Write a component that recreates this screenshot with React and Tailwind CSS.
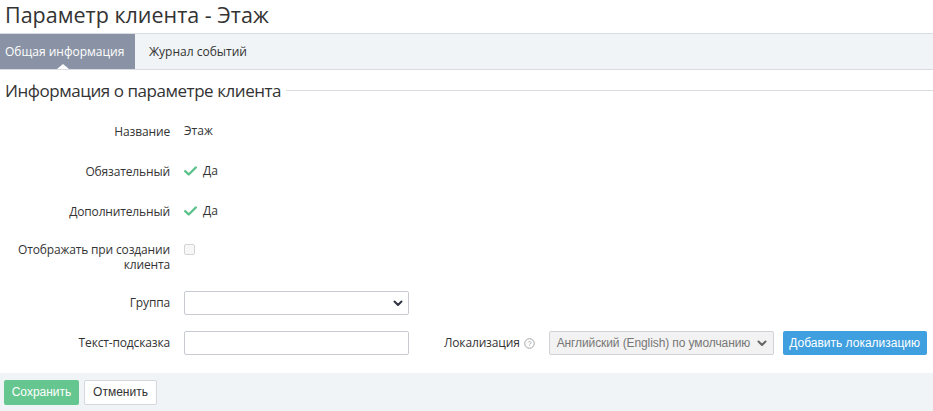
import React from "react";

function Check() {
  return (
    <svg width="13" height="10" viewBox="0 0 13 10" className="mr-[6px]">
      <path d="M1.2 5.2 L4.7 8.5 L11.8 1.5" fill="none" stroke="#5cc28a" strokeWidth="2.4" strokeLinecap="round" strokeLinejoin="round" />
    </svg>
  );
}

function Chevron({ color = "#2f3540" }) {
  return (
    <svg width="10" height="7" viewBox="0 0 10 7">
      <path d="M1.5 1.5 L5 5 L8.5 1.5" fill="none" stroke={color} strokeWidth="2" strokeLinecap="round" strokeLinejoin="round" />
    </svg>
  );
}

function Row({ label, children, className = "" }) {
  return (
    <div className={`flex ${className}`}>
      <div className="w-[170px] shrink-0 text-right text-[12px] leading-[15px] tracking-[-0.15px] text-[#333]">{label}</div>
      <div className="ml-[14px] flex items-center text-[12px] text-[#333]">{children}</div>
    </div>
  );
}

export default function App() {
  return (
    <div className="w-[933px] h-[411px] bg-white overflow-hidden" style={{ fontFamily: '"Open Sans", sans-serif' }}>
      <h1 className="h-[33px] pl-[5px] pt-[1px] text-[21.5px] leading-[28px] text-[#333] font-normal">Параметр клиента - Этаж</h1>

      <div className="flex h-[37px] border-y border-[#d9dce1] bg-[#f0f4f7] text-[12px]">
        <div className="relative flex items-center bg-[#8a93a5] px-[5px] w-[135px] text-white">
          Общая информация
          <div className="absolute bottom-0 left-[57px] h-0 w-0 border-x-[6px] border-b-[5px] border-x-transparent border-b-white" />
        </div>
        <div className="flex items-center pl-[14px] text-[#333]">Журнал событий</div>
      </div>

      <div className="flex items-center h-[41px] pl-[5px]">
        <span className="text-[17px] text-[#333] leading-[22px] tracking-[-0.45px]">Информация о параметре клиента</span>
        <div className="ml-[5px] flex-1 h-px bg-[#d9dce1]" />
      </div>

      <Row label="Название" className="h-[40px] items-center">Этаж</Row>
      <Row label="Обязательный" className="h-[40px] items-center"><Check />Да</Row>
      <Row label="Дополнительный" className="h-[40px] items-center"><Check />Да</Row>
      <div className="flex pt-[11px] h-[48px]">
        <div className="w-[170px] shrink-0 text-right text-[12px] leading-[15px] tracking-[-0.15px] text-[#333]">Отображать при создании клиента</div>
        <div className="ml-[14px] mt-[2px] h-[11px] w-[11px] rounded-[2px] border border-[#d4d4d4] bg-[#f7f7f7]" />
      </div>

      <div className="mt-[12px] flex items-center h-[24px]">
        <div className="w-[170px] shrink-0 text-right text-[12px] tracking-[-0.15px] text-[#333]">Группа</div>
        <div className="ml-[14px] flex h-[24px] w-[225px] items-center justify-end rounded-[2px] border border-[#c8ccd2] bg-white pr-[5px]">
          <Chevron />
        </div>
      </div>

      <div className="mt-[16px] flex items-center h-[24px]">
        <div className="w-[170px] shrink-0 text-right text-[12px] tracking-[-0.15px] text-[#333]">Текст-подсказка</div>
        <div className="ml-[14px] h-[24px] w-[225px] rounded-[2px] border border-[#c8ccd2] bg-white" />
        <div className="ml-[35px] flex items-center text-[12px] tracking-[-0.15px] text-[#333]">
          Локализация
          <svg width="11" height="11" viewBox="0 0 12 12" className="ml-[4px]">
            <circle cx="6" cy="6" r="5.2" fill="none" stroke="#9a9a9a" strokeWidth="1" />
            <text x="6" y="9" textAnchor="middle" fontSize="8" fill="#9a9a9a" fontFamily="Liberation Sans, sans-serif">?</text>
          </svg>
        </div>
        <div className="ml-[14px] flex h-[24px] w-[225px] items-center justify-between rounded-[2px] border border-[#cfd2d6] bg-[#f2f2f2] pl-[7px] pr-[6px] text-[12px] tracking-[-0.1px] text-[#777]" style={{ fontFamily: '"Liberation Sans", Arial, sans-serif' }}>
          <span>Английский (English) по умолчанию</span>
          <Chevron color="#666" />
        </div>
        <button className="ml-[9px] h-[24px] w-[144px] rounded-[2px] bg-[#3f9fdf] text-[12px] text-white" style={{ fontFamily: '"Liberation Sans", Arial, sans-serif' }}>
          Добавить локализацию
        </button>
      </div>

      <div className="mt-[18px] flex h-[38px] items-center gap-[5px] bg-[#f0f4f7] pl-[4px]" style={{ fontFamily: '"Liberation Sans", Arial, sans-serif' }}>
        <button className="h-[25px] w-[75px] rounded-[2px] bg-[#66c68f] text-[12px] text-white">Сохранить</button>
        <button className="h-[25px] w-[73px] rounded-[2px] border border-[#d4d7dc] bg-white text-[12px] text-[#333]">Отменить</button>
      </div>
    </div>
  );
}
